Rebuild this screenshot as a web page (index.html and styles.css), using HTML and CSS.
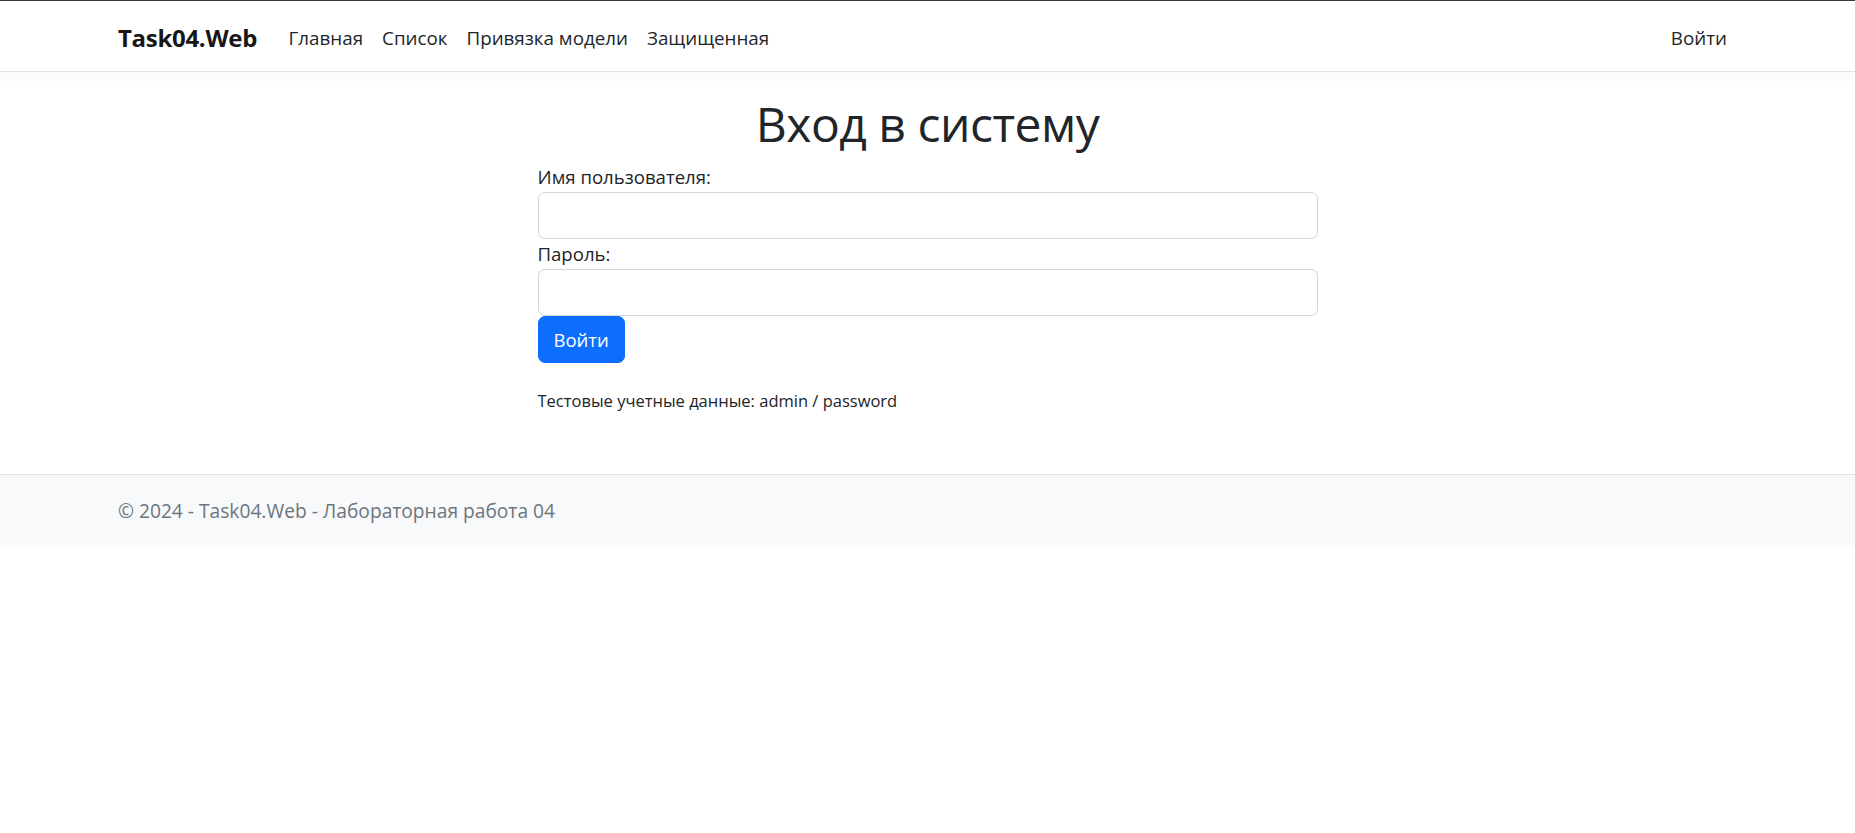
FILE: index.html
```html
<!DOCTYPE html>
<html lang="ru">
<head>
<meta charset="utf-8">
<title>Вход в систему - Task04.Web</title>
<link rel="stylesheet" href="styles.css">
</head>
<body>
<div class="topline"></div>
<header class="navbar">
  <a class="brand" href="#">Task04.Web</a>
  <nav class="nav-main">
    <a class="nav-link" href="#">Главная</a>
    <a class="nav-link" href="#">Список</a>
    <a class="nav-link" href="#">Привязка модели</a>
    <a class="nav-link" href="#">Защищенная</a>
  </nav>
  <nav class="nav-right">
    <a class="nav-link" href="#">Войти</a>
  </nav>
</header>
<main class="main">
  <h1 class="title">Вход в систему</h1>
  <form class="login-form">
    <label class="field-label" for="u">Имя пользователя:</label>
    <input class="field-input" id="u" type="text">
    <label class="field-label" for="p">Пароль:</label>
    <input class="field-input" id="p" type="password">
    <button class="btn-primary" type="button">Войти</button>
  </form>
  <p class="hint">Тестовые учетные данные: admin / password</p>
</main>
<footer class="footer">
  <span>© 2024 - Task04.Web - Лабораторная работа 04</span>
</footer>
</body>
</html>
```

FILE: styles.css
```css
* { box-sizing: border-box; }
html, body { margin: 0; padding: 0; }
body {
  font-family: "Open Sans", "Noto Sans", "Liberation Sans", sans-serif;
  color: #212529;
  background: #fff;
  font-size: 20px;
}
.topline { height: 1px; background: #3a3a3a; }
.navbar {
  height: 71px;
  border-bottom: 1px solid #dee2e6;
  box-shadow: 0 5px 15px rgba(0,0,0,.03);
  display: flex;
  align-items: center;
  padding: 3px 118px 0;
}
.brand {
  font-size: 24px;
  font-weight: 700;
  color: #161616;
  text-decoration: none;
  margin-right: 22px;
  letter-spacing: -0.3px;
}
.nav-main { display: flex; flex: 1; }
.nav-right { display: flex; }
.nav-link {
  font-size: 18.8px;
  color: #212529;
  text-decoration: none;
  padding: 0 9.5px;
  line-height: 30px;
}
.nav-right .nav-link { padding-right: 10px; }
.main {
  width: 780px;
  margin: 22px auto 0;
  padding-bottom: 60px;
}
.title {
  font-size: 48px;
  font-weight: 400;
  line-height: 60px;
  margin: 0 0 8px;
  text-align: center;
  letter-spacing: -0.5px;
}
.login-form { display: flex; flex-direction: column; align-items: flex-start; }
.field-label {
  font-size: 18.6px;
  line-height: 30px;
  height: 30px;
}
.field-input {
  width: 100%;
  height: 47px;
  border: 1px solid #d3d6da;
  border-radius: 7px;
  font-size: 20px;
  padding: 0 15px;
  margin: 0;
  background: #fff;
}
.btn-primary {
  height: 47px;
  background: #0d6efd;
  color: #fff;
  border: 1px solid #0d6efd;
  border-radius: 7px;
  font-family: inherit;
  font-size: 18.5px;
  padding: 0 15px;
  margin: 0;
}
.hint {
  font-size: 16.5px;
  line-height: 26px;
  margin: 25px 0 0;
}
.footer {
  border-top: 1px solid #dee2e6;
  background: #f8f9fa;
  height: 71px;
  padding: 0 118px;
  display: flex;
  align-items: center;
  font-size: 19.2px;
  color: #6c757d;
}
```
